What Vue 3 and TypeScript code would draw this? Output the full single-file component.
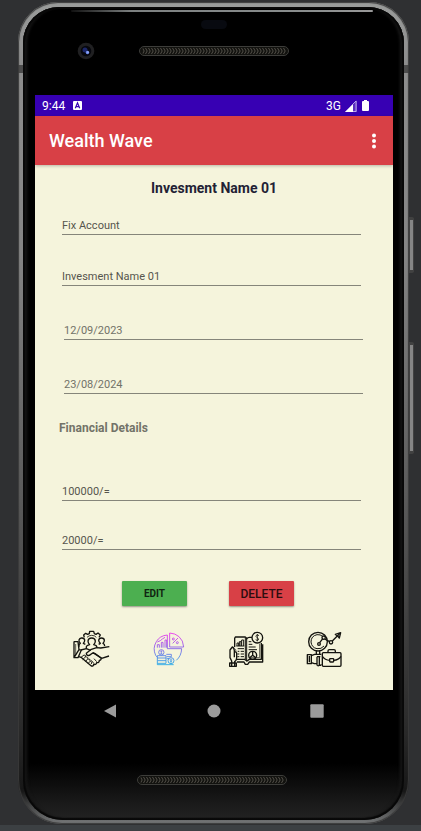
<script setup lang="ts">
import { reactive } from 'vue'

interface Field {
  id: string
  label: string
  value: string
}

const accountFields = reactive<Field[]>([
  { id: 'category', label: 'Investment category', value: 'Fix Account' },
  { id: 'name', label: 'Investment name', value: 'Invesment Name 01' },
])
const dateFields = reactive<Field[]>([
  { id: 'start', label: 'Start date', value: '12/09/2023' },
  { id: 'end', label: 'End date', value: '23/08/2024' },
])
const moneyFields = reactive<Field[]>([
  { id: 'amount', label: 'Amount', value: '100000/=' },
  { id: 'interest', label: 'Interest', value: '20000/=' },
])
</script>

<template>
  <div class="stage">
    <div class="phone">
      <span class="side-key power"></span>
      <span class="side-key volume"></span>
      <div class="body">
        <div class="bezel-top">
          <span class="sensor"></span>
          <div class="ear">
            <svg class="camera" viewBox="0 0 18 18" aria-hidden="true">
              <circle cx="9" cy="9" r="8.3" fill="#202022" />
              <circle cx="9" cy="9" r="5.3" fill="#06070d" />
              <circle cx="8" cy="8" r="2.5" fill="#1c2769" />
              <circle cx="10.5" cy="10.5" r="1.7" fill="#6f8df0" />
              <circle cx="11" cy="10" r="0.6" fill="#dfe8ff" />
            </svg>
            <svg class="speaker" viewBox="0 0 150 10" aria-hidden="true">
              <defs>
                <pattern id="mesh" width="3" height="10" patternUnits="userSpaceOnUse">
                  <path d="M0.5 2 L2.2 5 L0.5 8" fill="none" stroke="#5a574f" stroke-width="0.9" />
                </pattern>
              </defs>
              <rect x="0.5" y="0.5" width="149" height="9" rx="4.5" fill="#12120f" stroke="#3d3d3a" />
              <rect x="3" y="1" width="144" height="8" rx="4" fill="url(#mesh)" />
            </svg>
            <span></span>
          </div>
        </div>

        <main class="screen">
          <div class="status">
            <span>9:44</span>
            <svg class="badge-a" viewBox="0 0 9 9" aria-hidden="true">
              <rect width="9" height="9" rx="1" fill="#fff" />
              <path d="M2.3 7.2 L4.5 1.8 L6.7 7.2 M3.2 5.6 H5.8" fill="none" stroke="#3700b3" stroke-width="1.2" />
            </svg>
            <span class="network">3G</span>
            <svg class="signal" viewBox="0 0 12 12" aria-hidden="true">
              <path d="M0 12 L11.5 0.5 V12 Z" fill="#a792df" />
              <path d="M0 12 L8 4 V12 Z" fill="#fff" />
              <path d="M8 4 L11 1 V11.5 H8" fill="#5a2dc0" stroke="#c8baf0" stroke-width="0.8" />
            </svg>
            <svg class="battery" viewBox="0 0 7 11" aria-hidden="true">
              <path d="M2 0 H5 V1 H6 Q7 1 7 2 V10 Q7 11 6 11 H1 Q0 11 0 10 V2 Q0 1 1 1 H2 Z" fill="#fff" />
            </svg>
          </div>

          <header class="app-bar">
            <h1>Wealth Wave</h1>
            <button class="more" type="button" aria-label="More options">
              <svg viewBox="0 0 4 16" aria-hidden="true">
                <circle cx="2" cy="2.6" r="2" />
                <circle cx="2" cy="8" r="2" />
                <circle cx="2" cy="13.4" r="2" />
              </svg>
            </button>
          </header>

          <h2>Invesment Name 01</h2>
          <form class="form" @submit.prevent>
            <div class="fields">
              <input v-for="f in accountFields" :id="f.id" :key="f.id" v-model="f.value" type="text" :aria-label="f.label" />
            </div>
            <div class="fields dates">
              <input v-for="f in dateFields" :id="f.id" :key="f.id" v-model="f.value" type="text" :aria-label="f.label" />
            </div>
            <h3>Financial Details</h3>
            <div class="fields money">
              <input v-for="f in moneyFields" :id="f.id" :key="f.id" v-model="f.value" type="text" :aria-label="f.label" />
            </div>
            <div class="actions">
              <button class="edit" type="button">EDIT</button>
              <button class="delete" type="button">DELETE</button>
            </div>
          </form>

          <nav class="tabs">
            <button type="button" aria-label="Partners">
              <svg viewBox="18 18 114 114" class="ink" aria-hidden="true">
                <path d="M55 40 L53 33 L59 28 L65 31 L70 29 L71 22 H83 L85 29 L90 31 L96 27 L103 33 L99 40" />
                <path d="M63 40 Q69 34 77 34 Q86 34 91 40" stroke-width="2.5" />
                <path d="M39 68 V64 Q39 60 43 58 Q38 53 39 48 Q41 41 48 42 Q56 43 56 49 Q56 55 52 58 L58 61" />
                <path d="M98 61 L103 58 Q98 54 98 49 Q99 42 106 42 Q115 42 115 49 Q115 55 111 58 Q116 60 116 66" />
                <path d="M61 74 V68 Q62 64 71 62 Q66 58 66 51 Q67 42 77 42 Q87 42 88 51 Q88 58 83 62 Q92 64 93 69" />
                <path d="M23 53 L36 53 L39 77 L24 101 M24 53 V101 L36 101 L46 78 L38 77" />
                <path d="M29 60 V93" stroke-width="2" />
                <path d="M45 78 L61 74 L74 79 M36 97 L45 100 L76 126 Q82 128 83 121 Q91 123 92 116 Q100 117 100 109 Q107 108 105 102 L81 86" />
                <path d="M130 68 L104 72 L92 71 L76 76 L61 88 Q61 96 70 94 L80 87 L88 89 L107 103 L129 96" />
                <path d="M45 100 L54 93 Q61 93 58 99 L50 107 M58 99 Q68 98 65 105 L58 113 M66 105 Q75 104 72 112 L66 119 M73 112 Q80 113 76 120 M84 104 L92 113 M76 109 L84 119" stroke-width="2.8" />
              </svg>
            </button>
            <button type="button" aria-label="Portfolio">
              <svg viewBox="12 18 114 114" class="tint" aria-hidden="true">
                <defs>
                  <linearGradient id="hue" gradientUnits="userSpaceOnUse" x1="0" y1="25" x2="0" y2="124">
                    <stop offset="0" stop-color="#f22bee" />
                    <stop offset="0.45" stop-color="#8a5be8" />
                    <stop offset="1" stop-color="#18a9e8" />
                  </linearGradient>
                </defs>
                <path d="M71 27 V69 H113 Q112 49 99 38 Q88 28 71 27 Z" />
                <path d="M64 33 Q41 35 31 53 Q19 73 29 94 L34 100" />
                <path d="M64 33 V74 H107 Q106 96 91 109" />
                <path d="M34 71 V62 H40 V71 M46 71 V55 H51 V71 M57 71 V48 H62 V71 M34 54 L43 50 L49 45 L57 40" />
                <path d="M80 58 L96 42" />
                <circle cx="82" cy="45" r="3" />
                <circle cx="94" cy="56" r="3" />
                <circle cx="46" cy="85" r="8" />
                <path d="M46 79 V91 M43 82 H49 M43 88 H49" stroke-width="2" />
                <path d="M34 95 H60 V102 H34 Z M34 102 V110 H60 V102 M34 110 V118 H60 V110 M34 118 V122 H83" />
                <path d="M61 91 H76 V98 H62 M62 104 H70" />
                <circle cx="75" cy="110" r="9" />
                <path d="M75 104 V116 M71 108 H79 M72 113 H78" stroke-width="2" />
              </svg>
            </button>
            <button type="button" aria-label="Reports">
              <svg viewBox="18 18 114 114" class="ink" aria-hidden="true">
                <path d="M38 69 V43 L40 39 H70 Q74 41 74 45 Q77 40 82 40 H90" />
                <path d="M74 45 V112 M70 40 V105" stroke-width="3" />
                <path d="M118 57 V106 H82 L75 111 L68 106 H42 M122 61 V114 H82 L77 121 H70 L66 114 H45" />
                <path d="M113 59 V101 H80" stroke-width="2" />
                <path d="M45 66 V57 H50 V66 M52 66 V53 H57 V66 M59 66 V48 H65 V66 M43 66 H67" stroke-width="3" />
                <path d="M47 74 H66 M47 82 H52 M56 82 H66 M46 90 H52 M56 90 H66 M46 98 H52 M56 98 H66 M80 53 H88 M80 61 H91 M80 69 H101 M80 77 H105" stroke-width="3" />
                <circle cx="92" cy="94" r="12" />
                <path d="M92 82 V94 L83 101 M92 94 L101 101" />
                <circle cx="106" cy="41" r="16" />
                <path d="M111 35 Q107 31 103 34 Q100 38 105 41 Q112 44 109 48 Q105 51 101 47 M106 30 V52" stroke-width="2.5" />
                <path d="M37 100 V80 Q36 70 31 69 L24 78 V101 L29 111 V126 M37 83 Q45 83 44 91 V102 Q43 110 38 113 V126 M23 117 H43 V127 H23 Z" />
                <path d="M38 74 Q42 75 42 83" stroke-width="2" />
              </svg>
            </button>
            <button type="button" aria-label="Business">
              <svg viewBox="18 18 114 114" class="ink" aria-hidden="true">
                <circle cx="54" cy="53" r="28" />
                <path d="M72 66 Q64 76 51 74 Q35 71 33 54 Q33 36 51 32 Q61 31 68 37" stroke-width="3" />
                <circle cx="57" cy="60" r="4" />
                <path d="M59 56 L69 43 M74 45 L89 53 M97 51 L120 28" />
                <circle cx="71" cy="41" r="5" />
                <circle cx="93" cy="55" r="5" />
                <path d="M106 31 L122 26 L118 42 L113 36 Z" />
                <path d="M49 81 V92 M59 81 V91" />
                <path d="M22 92 H34 V119 H22 Z M28 96 V115" />
                <path d="M34 95 L44 91 H64 M34 116 L43 119 H50 M51 98 H61 M51 98 V123 Q54 128 58 123 V100 M58 123 Q62 126 64 121" />
                <rect x="67" y="86" width="56" height="41" rx="3" />
                <path d="M84 85 V81 Q84 77 88 77 H102 Q106 77 106 81 V85 M67 97 Q75 108 89 109 M101 109 Q116 108 123 97" />
                <rect x="89" y="104" width="12" height="10" rx="2" />
              </svg>
            </button>
          </nav>
        </main>

        <div class="system-nav">
          <button type="button" aria-label="Back">
            <svg viewBox="0 0 14 14" aria-hidden="true"><path d="M0 7 L12 0.5 V13.5 Z" /></svg>
          </button>
          <button type="button" aria-label="Home">
            <svg viewBox="0 0 14 14" aria-hidden="true"><circle cx="7" cy="7" r="6.5" /></svg>
          </button>
          <button type="button" aria-label="Overview">
            <svg viewBox="0 0 14 14" aria-hidden="true"><rect x="0.3" y="0.3" width="13.4" height="13.4" rx="1" /></svg>
          </button>
        </div>
        <div class="bezel-bottom">
          <svg class="speaker" viewBox="0 0 150 10" aria-hidden="true">
            <rect x="0.5" y="0.5" width="149" height="9" rx="4.5" fill="#12120f" stroke="#3d3d3a" />
            <rect x="3" y="1" width="144" height="8" rx="4" fill="url(#mesh)" />
          </svg>
        </div>
      </div>
    </div>
  </div>
</template>

<style>
body {
  background: #2f3032;
}
</style>

<style scoped>
.stage {
  box-sizing: border-box;
  min-height: 100vh;
  padding: 2px 12px 1px 18px;
  background: #2f3032;
  border-bottom: 6px solid #3c4043;
  font-family: Roboto, "Liberation Sans", sans-serif;
}
.phone {
  position: relative;
  padding: 5px 5px 4px;
  border-radius: 40px 40px 44px 44px;
  background: linear-gradient(#9a9c9b 0, #8d8d8d 63px, #4c4c4c 63px, #4c4c4c 71px, #8d8d8d 71px, #858585 30%, #5b5b5b 60%, #2b2b2b 88%, #171717 96%, #77797a 100%);
  box-shadow: inset 0 0 1px 1px #3a3a3a;
}
.side-key {
  position: absolute;
  left: 100%;
  width: 5px;
  box-sizing: border-box;
  background: #858585;
  border: 1px solid #414141;
  border-width: 3px 1px;
  border-radius: 0 2px 2px 0;
}
.power {
  top: 215px;
  height: 56px;
}
.volume {
  top: 340px;
  height: 112px;
}
.body {
  padding: 0 11px 0 12px;
  border-radius: 36px 36px 40px 40px;
  background: linear-gradient(#000 0, #000 93%, #1a1a1a 98%, #222 100%);
  box-shadow: inset 0 0 1px 2px #080808, inset 4px 0 3px #171717, inset -4px 0 3px #171717;
}
.bezel-top {
  display: flex;
  flex-direction: column;
  align-items: center;
  height: 88px;
  box-sizing: border-box;
  padding-top: 3px;
}
.bezel-top::before {
  content: "";
  align-self: stretch;
  height: 2px;
  margin: 0 20px 0 36px;
  border-radius: 1px;
  background: linear-gradient(90deg, #111, #7c8080 20%, #8a8e8e 80%, #999);
}
.sensor {
  width: 26px;
  height: 9px;
  margin-top: 8px;
  border-radius: 5px;
  background: #080a10;
}
.ear {
  display: grid;
  grid-template-columns: 1fr auto 1fr;
  align-items: center;
  align-self: stretch;
  margin-top: 13px;
}
.camera {
  width: 18px;
  height: 18px;
  margin-left: 42px;
}
.speaker {
  display: block;
  width: 150px;
  height: 10px;
}
.screen {
  padding-bottom: 22px;
  background: #f5f4dc;
}
.status {
  display: flex;
  align-items: center;
  height: 21px;
  padding: 0 24px 0 7px;
  background: #3700b3;
  color: #fff;
  font-size: 12px;
}
.badge-a {
  width: 9px;
  height: 9px;
  margin-left: 8px;
}
.network {
  margin-left: auto;
}
.signal {
  width: 12px;
  height: 12px;
  margin: 0 5px 0 4px;
}
.battery {
  width: 7px;
  height: 11px;
}
.app-bar {
  display: flex;
  align-items: center;
  justify-content: space-between;
  height: 49px;
  padding: 0 9px 0 14px;
  background: #d84046;
  box-shadow: 0 1px 3px rgba(0, 0, 0, 0.25);
  color: #fff;
}
h1,
h2,
h3 {
  margin: 0;
}
h1 {
  font-size: 18px;
  font-weight: 500;
}
button {
  padding: 0;
  border: 0;
  background: none;
  font-family: inherit;
}
.more {
  display: grid;
  place-items: center;
  width: 20px;
  height: 32px;
}
.more svg {
  width: 4px;
  height: 16px;
  fill: #fff;
}
h2 {
  margin: 15px 0;
  color: #231f35;
  font-size: 14px;
  line-height: 16px;
  text-align: center;
}
.form {
  padding: 0 32px 0 24px;
}
.fields {
  display: grid;
  gap: 27px;
  margin-left: 3px;
}
.dates {
  gap: 30px;
  margin: 30px -2px 0 5px;
}
.money {
  gap: 25px;
}
input {
  box-sizing: border-box;
  width: 100%;
  height: 24px;
  padding: 5px 0 0;
  border: 0;
  border-bottom: 1px solid #85857a;
  border-radius: 0;
  background: none;
  color: #55554d;
  font-family: inherit;
  font-size: 11px;
  outline: none;
}
.dates input {
  color: #727268;
}
h3 {
  margin: 27px 0 42px;
  color: #727268;
  font-size: 12px;
  line-height: 14px;
}
.actions {
  display: flex;
  justify-content: center;
  gap: 42px;
  margin-top: 31px;
  padding-right: 4px;
}
.actions button {
  width: 65px;
  height: 25px;
  border-radius: 1px;
  box-shadow: 0 1px 2px rgba(0, 0, 0, 0.4);
}
.actions .edit {
  background: #4caf50;
  color: #102411;
  font-size: 10px;
  font-weight: 700;
}
.actions .delete {
  background: #d84046;
  color: #2b0d0e;
  font-size: 12px;
  font-weight: 500;
}
.tabs {
  display: grid;
  grid-template-columns: repeat(4, 1fr);
  justify-items: center;
  margin-top: 24px;
  padding: 0 29px 0 17px;
}
.tabs svg {
  display: block;
  width: 38px;
  height: 38px;
  fill: none;
  stroke-linejoin: round;
}
.ink {
  stroke: #14140f;
  stroke-width: 4;
}
.tint {
  stroke: url(#hue);
  stroke-width: 2.6;
}
.system-nav {
  display: grid;
  grid-template-columns: repeat(3, 1fr);
  justify-items: center;
  padding: 14px 24px 0;
}
.system-nav svg {
  display: block;
  width: 14px;
  height: 14px;
  fill: #9b9b9b;
}
.bezel-bottom {
  display: flex;
  justify-content: center;
  padding: 57px 4px 35px 0;
}
</style>
